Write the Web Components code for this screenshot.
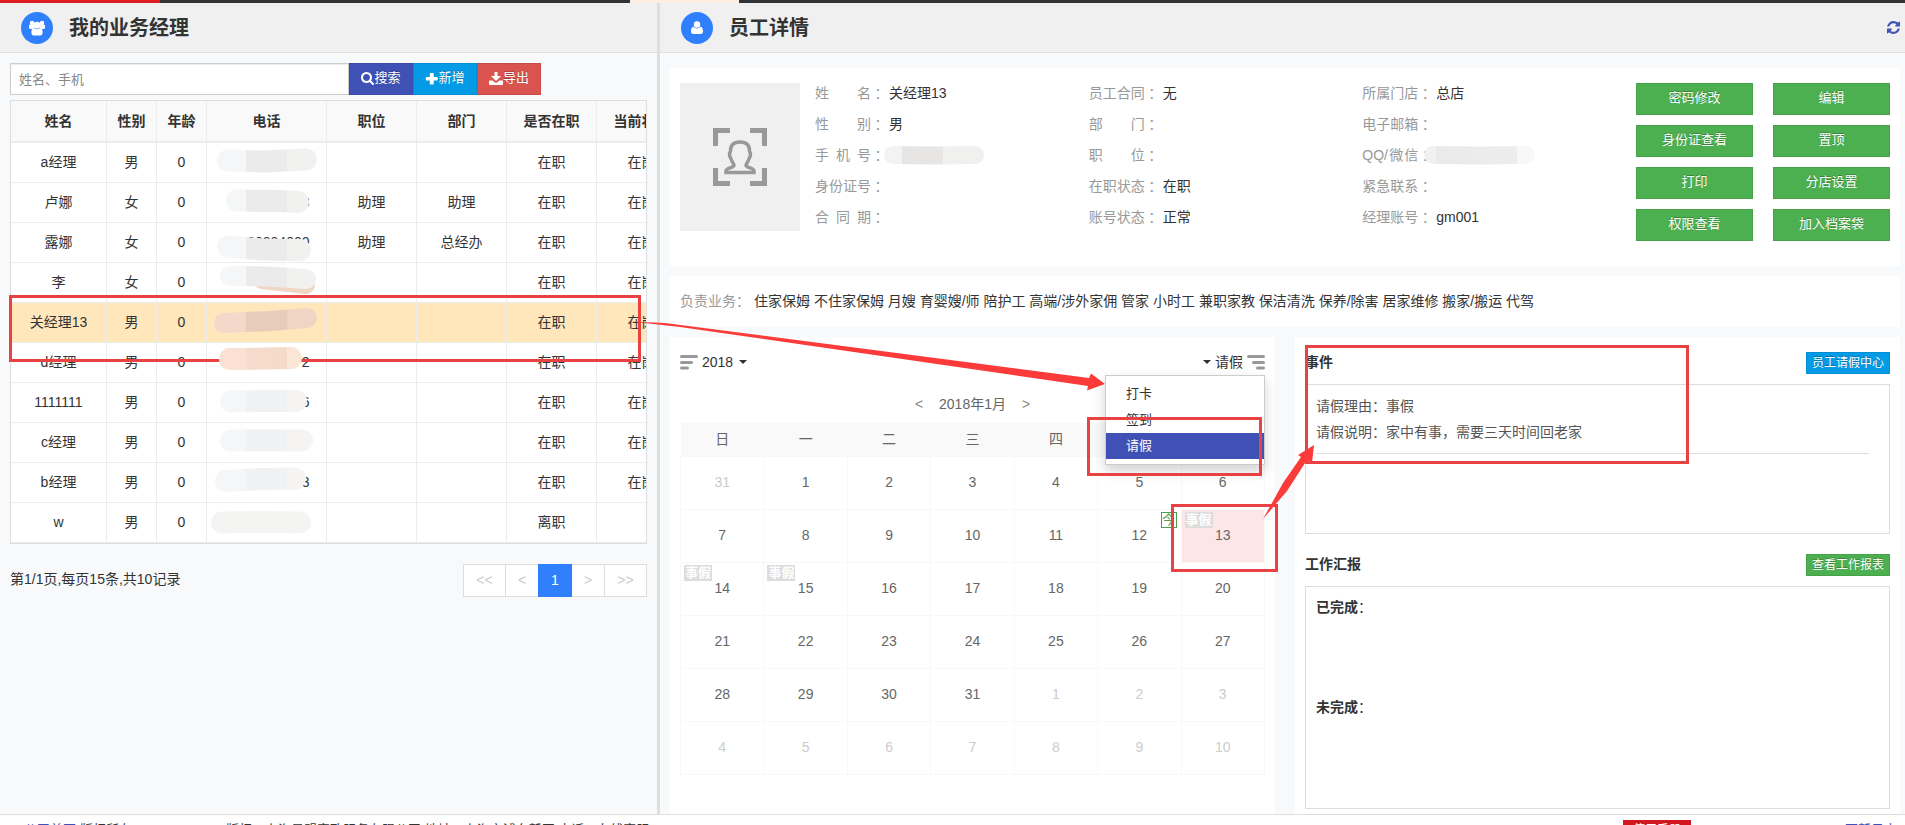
<!DOCTYPE html>
<html lang="zh-CN">
<head>
<meta charset="utf-8">
<title>员工详情</title>
<style>
  html, body { margin: 0; height: 100%; }
  body {
    font: 14px/21px "Liberation Sans", "Noto Sans CJK SC", sans-serif;
    color: #333;
    background: #f7f9fb;
    overflow: hidden;
  }
</style>
</head>
<body>
<app-shell>
  <manager-panel slot="left"></manager-panel>
  <employee-panel slot="right"></employee-panel>
</app-shell>

<script>
/* .mid sets full-width punctuation in the middle of its square */
const base = `
  *, *::before, *::after { box-sizing: border-box; }
  button, input, select { font: inherit; color: inherit; margin: 0; border-radius: 0; }
  button { cursor: pointer; padding: 0; border: 0; background: none; }
  svg { display: block; flex: none; }
  a { text-decoration: none; color: inherit; }
  .mid { font-family: "Noto Sans CJK TC", sans-serif; font-weight: normal; font-style: normal; line-height: 1; }
`;

function define(name, html, setup) {
  const template = document.createElement('template');
  template.innerHTML = html;
  customElements.define(name, class extends HTMLElement {
    constructor() {
      super();
      const root = this.attachShadow({ mode: 'open' });
      const style = document.createElement('style');
      style.textContent = base;
      root.append(style, template.content.cloneNode(true));
    }
    connectedCallback() {
      if (setup) setup(this.shadowRoot, this);
    }
  });
}

/* Panel title bar */
define('panel-header', `
  <style>
    :host { display: flex; align-items: center; height: 50px; padding: 0 5px 0 21px; gap: 16px; background: #f0f0f0; border-bottom: 1px solid #e0e0e0; }
    .disc { display: grid; place-items: center; width: 32px; height: 32px; border-radius: 50%; background: #3080fe; color: #fff; }
    h1 { margin: 0; font-size: 20px; line-height: 30px; font-weight: bold; flex: 1; }
  </style>
  <span class="disc"><slot name="icon"></slot></span>
  <h1><slot></slot></h1>
  <slot name="action"></slot>
`);

/* Solid coloured button */
define('color-button', `
  <style>
    :host { display: block; --tone: #4caf50; }
    :host([tone="indigo"]) { --tone: #3f51b5; }
    :host([tone="blue"]) { --tone: #039be5; }
    :host([tone="red"]) { --tone: #d9534f; }
    button { display: flex; align-items: center; justify-content: center; width: 100%; height: 32px; font-size: 13px; line-height: 20px; padding-bottom: 2px; color: #fff; background: var(--tone); border: 1px solid rgba(0,0,0,.08); white-space: nowrap; text-shadow: 0 -1px 0 rgba(0,0,0,.25); }
    :host([small]) button { height: 22px; padding: 0 5px; font-size: 12px; }
  </style>
  <button type="button"><slot name="icon"></slot><slot></slot></button>
`);

/* Staff table */
define('manager-table', `
  <style>
    :host { display: block; overflow: hidden; border: 1px solid #ddd; background: #fff; }
    table { width: 676px; table-layout: fixed; border-spacing: 0; border-collapse: separate; }
    th, td { padding: 0; text-align: center; border-right: 1px solid #ececec; border-bottom: 1px solid #ececec; white-space: nowrap; }
    th { height: 42px; background: #f9f9f9; border-bottom-width: 2px; }
    td { height: 40px; }
    tr.active td { background: #ffe6bb; }
    .tail { display: inline-block; width: 86px; text-align: right; vertical-align: top; }
  </style>
  <table>
    <colgroup><col width="96"><col width="50"><col width="50"><col width="120"><col width="90"><col width="90"><col width="90"><col width="90"></colgroup>
    <thead><tr><th>姓名</th><th>性别</th><th>年龄</th><th>电话</th><th>职位</th><th>部门</th><th>是否在职</th><th>当前状态</th></tr></thead>
    <tbody></tbody>
  </table>
`, root => {
  const rows = [
    ['a经理', '男', '', '', '', '在职', '在岗'],
    ['卢娜', '女', '3', '助理', '助理', '在职', '在岗'],
    ['露娜', '女', '00004000', '助理', '总经办', '在职', '在岗'],
    ['李', '女', '', '', '', '在职', '在岗'],
    ['关经理13', '男', '138', '', '', '在职', '在岗'],
    ['d经理', '男', '2', '', '', '在职', '在岗'],
    ['1111111', '男', '6', '', '', '在职', '在岗'],
    ['c经理', '男', '', '', '', '在职', '在岗'],
    ['b经理', '男', '3', '', '', '在职', '在岗'],
    ['w', '男', '', '', '', '离职', '']
  ];
  root.querySelector('tbody').innerHTML = rows.map(([name, sex, tail, post, dept, employed, state]) =>
    `<tr${name === '关经理13' ? ' class="active"' : ''}><td>${name}</td><td>${sex}</td><td>0</td><td><span class="tail">${tail}</span></td><td>${post}</td><td>${dept}</td><td>${employed}</td><td>${state}</td></tr>`
  ).join('');
});

/* Pagination */
define('page-nav', `
  <style>
    :host { display: flex; justify-content: space-between; align-items: center; }
    p { margin: 0; padding-bottom: 2px; }
    nav { display: flex; border: 1px solid #ddd; background: #fff; }
    button { width: 33px; height: 31px; color: #ccc; border-right: 1px solid #ddd; }
    button.wide { width: 42px; }
    button:last-child { border-right: 0; width: 41px; }
    button.on { width: 34px; height: 33px; margin: -1px 0 -1px -1px; background: #3080fe; color: #fff; border: 0; }
  </style>
  <p>第1/1页,每页15条,共10记录</p>
  <nav aria-label="分页">
    <button type="button" class="wide">&lt;&lt;</button><button type="button">&lt;</button><button type="button" class="on">1</button><button type="button">&gt;</button><button type="button" class="wide">&gt;&gt;</button>
  </nav>
`);

define('manager-panel', `
  <style>
    :host { display: block; height: 100%; border-right: 3px solid #dcdfde; }
    .body { padding: 10px; }
    form { display: flex; margin-bottom: 5px; }
    input { width: 339px; height: 32px; padding: 0 8px; font-size: 13px; border: 1px solid #ccc; background: #fff; box-shadow: inset 0 1px 1px rgba(0,0,0,.08); }
    input::placeholder { color: #888; opacity: 1; }
    color-button { width: 64px; }
    page-nav { margin-top: 20px; }
  </style>
  <panel-header>
    <svg slot="icon" width="16" height="16" viewBox="0 0 16 16" fill="currentColor"><circle cx="3" cy="3" r="2.2"/><circle cx="13" cy="3" r="2.2"/><path d="M0 6q0-1.500 1-1.500h4L5 8.500Q3.500 8.500 2.500 9H1.500Q0 9 0 7.500zM16 6q0-1.500-1-1.500h-4L11 8.500q1.500 0 2.500.5h1Q16 9 16 7.500z"/><circle cx="8" cy="5.200" r="3.400"/><path d="M5 8Q6.500 9.200 8 9.200t3-1.200c2.200.2 2.600 2.600 2.600 4.600 0 1.800-1 2.900-2.300 2.900H4.700C3.400 15.500 2.400 14.400 2.400 12.600c0-2 .4-4.400 2.600-4.600z"/></svg>
    我的业务经理
  </panel-header>
  <div class="body">
    <form>
      <input type="text" placeholder="姓名、手机" aria-label="姓名、手机">
      <color-button tone="indigo"><svg slot="icon" width="13" height="13" viewBox="0 0 1664 1664" fill="#fff"><path d="M1152 704q0-185-131.500-316.500T704 256 387.500 387.500 256 704t131.500 316.500T704 1152t316.500-131.500T1152 704zm512 832q0 52-38 90t-90 38q-54 0-90-38l-343-342q-179 124-399 124-143 0-273.500-55.500t-225-150-150-225T0 704t55.500-273.500 150-225 225-150T704 0t273.500 55.500 225 150 150 225T1408 704q0 220-124 399l343 343q37 37 37 90z"/></svg>搜索</color-button>
      <color-button tone="blue"><svg slot="icon" width="13" height="13" viewBox="0 0 13 13" fill="#fff"><path d="M5.500 1h2.500q.7 0 .7.700V5H12q.7 0 .7.700v2.100q0 .7-.7.700H8.700v3.300q0 .7-.7.700H5.500q-.7 0-.7-.7V8.500H1.500Q.8 8.500.8 7.800V5.700Q.8 5 1.500 5h3.300V1.700q0-.7.700-.7z"/></svg>新增</color-button>
      <color-button tone="red"><svg slot="icon" width="14" height="13" viewBox="0 0 14 13" fill="#fff"><path d="M5.500 0h3v4H12L7 9 2 4h3.500zM0 9.200Q0 8.500.7 8.500h3L5.500 10.200Q7 11.500 8.500 10.200L10.300 8.500h3q.7 0 .7.700v3q0 .8-.7.800H.7Q0 13 0 12.200z"/></svg>导出</color-button>
    </form>
    <manager-table></manager-table>
    <page-nav></page-nav>
  </div>
`);

/* Employee summary card */
define('employee-info', `
  <style>
    :host { display: flex; padding: 15px 10px 25px; background: #fff; }
    .photo { display: grid; place-items: center; flex: none; width: 120px; height: 148px; background: #f0f0f0; }
    .facts { flex: 1; display: grid; grid-template-columns: repeat(3, 1fr); }
    dl { margin: 0; padding-left: 15px; display: grid; grid-template-columns: 56px 18px 1fr; grid-auto-rows: 21px; row-gap: 10px; }
    dt, dd { margin: 0; white-space: nowrap; }
    dt { color: #999; text-align: justify; text-align-last: justify; }
    .mid { color: #999; line-height: 21px; }
    .actions { display: grid; grid-template-columns: 117px 117px; gap: 10px 20px; align-content: start; margin-left: 15px; }
  </style>
  <div class="photo">
    <svg width="54" height="58" viewBox="0 0 54 58" fill="none" stroke="#999"><path stroke-width="5" d="M2.500 18V2.500H17M37 2.500h14.500V18M51.500 40v15.500H37M17 55.500H2.500V40"/><path stroke-width="3.500" d="M27 14c-7 0-9.500 4-9.500 9 0 1-1.500 2-1 4 .5 3 1.500 3 2 5 1 3 2.500 4 2.500 5.500 0 2-8 2.500-8 5.500v1.500h28V43c0-3-8-3.500-8-5.500 0-1.500 1.500-2.500 2.500-5.500.5-2 1.500-2 2-5 .5-2-1-3-1-4 0-5-2.500-9-9.500-9z"/></svg>
  </div>
  <div class="facts">
    <dl><dt>姓 名</dt><i class="mid">：</i><dd>关经理13</dd><dt>性 别</dt><i class="mid">：</i><dd>男</dd><dt>手 机 号</dt><i class="mid">：</i><dd></dd><dt>身份证号</dt><i class="mid">：</i><dd></dd><dt>合 同 期</dt><i class="mid">：</i><dd></dd></dl>
    <dl><dt>员工合同</dt><i class="mid">：</i><dd>无</dd><dt>部 门</dt><i class="mid">：</i><dd></dd><dt>职 位</dt><i class="mid">：</i><dd></dd><dt>在职状态</dt><i class="mid">：</i><dd>在职</dd><dt>账号状态</dt><i class="mid">：</i><dd>正常</dd></dl>
    <dl><dt>所属门店</dt><i class="mid">：</i><dd>总店</dd><dt>电子邮箱</dt><i class="mid">：</i><dd></dd><dt>QQ/微信</dt><i class="mid">：</i><dd></dd><dt>紧急联系</dt><i class="mid">：</i><dd></dd><dt>经理账号</dt><i class="mid">：</i><dd>gm001</dd></dl>
  </div>
  <div class="actions">
    <color-button>密码修改</color-button><color-button>编辑</color-button>
    <color-button>身份证查看</color-button><color-button>置顶</color-button>
    <color-button>打印</color-button><color-button>分店设置</color-button>
    <color-button>权限查看</color-button><color-button>加入档案袋</color-button>
  </div>
`);

define('business-list', `
  <style>
    :host { display: flex; padding: 15px 10px; background: #fff; }
    b { width: 74px; font-weight: normal; color: #999; }
  </style>
  <b>负责业务<span class="mid">：</span></b><span><slot></slot></span>
`);

/* Attendance calendar */
define('leave-calendar', `
  <style>
    :host { display: block; padding: 15px 10px 0; background: #fff; }
    .bar { position: relative; display: flex; justify-content: space-between; height: 20px; }
    .pick { display: flex; align-items: center; gap: 4px; line-height: 20px; }
    select { appearance: none; border: 0; background: none; padding: 0; width: 33px; outline: 0; }
    .menu { position: absolute; z-index: 1; right: 0; top: 23px; width: 160px; margin: 0; padding: 5px 0; list-style: none; background: #fff; border: 1px solid #ccc; box-shadow: 0 6px 12px rgba(0,0,0,.18); }
    .menu button { display: block; width: 100%; padding: 0 20px; text-align: left; font-size: 13px; line-height: 26px; }
    .menu .on { background: #3f51b5; color: #fff; }
    .month { display: flex; justify-content: center; gap: 15px; margin: 22px 0 8px; color: #666; }
    .month button { color: #888; width: 10px; }
    table { width: 100%; table-layout: fixed; border-collapse: collapse; color: #666; }
    th { height: 33px; padding: 0; background: #f9f9f9; font-weight: normal; }
    td { position: relative; height: 53px; padding: 0; text-align: center; border: 1px solid #f8f8f8; }
    td.out { color: #ccc; }
    td.sel { background: #ffe6e6; }
    .tag { position: absolute; left: 3px; top: 2px; width: 28px; height: 16px; background: #ddd; color: #fff; font-size: 13px; line-height: 16px; font-weight: bold; }
    .now { position: absolute; right: 4px; top: 2px; width: 16px; height: 16px; border: 1px solid #4c9e50; color: #4c9e50; font-size: 13px; line-height: 14px; }
  </style>
  <div class="bar">
    <label class="pick">
      <svg width="18" height="15" viewBox="0 0 18 15" stroke="#999" stroke-width="3" stroke-linecap="round"><path d="M1.500 1.500h15M1.500 7.500h10M1.500 13h6"/></svg>
      <select aria-label="年份"><option>2018</option></select>
      <svg width="8" height="4" viewBox="0 0 8 4" fill="#333"><path d="M0 0h8L4 4z"/></svg>
    </label>
    <button type="button" class="pick" aria-haspopup="true" aria-expanded="true">
      <svg width="8" height="4" viewBox="0 0 8 4" fill="#333"><path d="M0 0h8L4 4z"/></svg>
      请假
      <svg width="18" height="15" viewBox="0 0 18 15" stroke="#999" stroke-width="3" stroke-linecap="round"><path d="M1.500 1.500h15M6.500 7.500h10M10.500 13h6"/></svg>
    </button>
    <ul class="menu">
      <li><button type="button">打卡</button></li>
      <li><button type="button">签到</button></li>
      <li><button type="button" class="on">请假</button></li>
    </ul>
  </div>
  <div class="month"><button type="button">&lt;</button><span>2018年1月</span><button type="button">&gt;</button></div>
  <table>
    <thead><tr><th>日</th><th>一</th><th>二</th><th>三</th><th>四</th><th>五</th><th>六</th></tr></thead>
    <tbody></tbody>
  </table>
`, root => {
  const leave = new Set([13, 14, 15]);
  let html = '';
  for (let i = 0; i < 42; i++) {
    const day = i === 0 ? 31 : i > 31 ? i - 31 : i;
    const out = i === 0 || i > 31;
    const cls = out ? ' class="out"' : i === 13 ? ' class="sel"' : '';
    const tag = leave.has(i) ? '<span class="tag">事假</span>' : i === 12 ? '<span class="now">今</span>' : '';
    html += (i % 7 ? '' : '<tr>') + `<td${cls}>${tag}${day}</td>` + (i % 7 === 6 ? '</tr>' : '');
  }
  root.querySelector('tbody').innerHTML = html;
});

/* Titled box with a button at its right */
define('titled-box', `
  <style>
    :host { display: flex; flex-direction: column; }
    header { display: flex; align-items: center; justify-content: space-between; height: 22px; margin-bottom: 10px; }
    h2 { margin: 0; font-size: 14px; line-height: 21px; padding-bottom: 2px; }
    .box { flex: 1; padding: 8px 10px; border: 1px solid #ddd; }
  </style>
  <header><h2><slot name="title"></slot></h2><slot name="action"></slot></header>
  <div class="box"><slot></slot></div>
`);

define('work-panel', `
  <style>
    :host { display: flex; flex-direction: column; gap: 20px; padding: 15px 10px 5px; background: #fff; }
    .events { height: 182px; }
    .report { flex: 1; }
    .event { margin-right: 10px; padding-bottom: 8px; border-bottom: 1px solid #ddd; color: #555; }
    p { margin: 0; line-height: 26px; }
    h3 { margin: 0; font-size: 14px; line-height: 24px; height: 100px; }
  </style>
  <titled-box class="events">
    <span slot="title">事件</span><color-button slot="action" small tone="blue">员工请假中心</color-button>
    <div class="event"><p>请假理由<span class="mid">：</span>事假</p><p>请假说明<span class="mid">：</span>家中有事<span class="mid">，</span>需要三天时间回老家</p></div>
  </titled-box>
  <titled-box class="report">
    <span slot="title">工作汇报</span><color-button slot="action" small>查看工作报表</color-button>
    <h3>已完成<span class="mid">：</span></h3>
    <h3>未完成<span class="mid">：</span></h3>
  </titled-box>
`);

define('employee-panel', `
  <style>
    :host { display: flex; flex-direction: column; height: 100%; }
    .refresh { color: #3f51b5; }
    .body { flex: 1; display: flex; flex-direction: column; gap: 10px; padding: 15px 5px 0 10px; }
    .columns { flex: 1; display: grid; grid-template-columns: 1fr 1fr; gap: 20px; }
  </style>
  <panel-header>
    <svg slot="icon" width="12" height="13" viewBox="0 0 12 13" fill="currentColor"><circle cx="6" cy="3.500" r="3.200"/><path d="M2.500 5.800Q4 7.500 6 7.500t3.500-1.700C11.600 6.200 12 8.500 12 10.500 12 12 11 13 9.800 13H2.200C1 13 0 12 0 10.500c0-2 .4-4.300 2.500-4.700z"/></svg>
    员工详情
    <button slot="action" class="refresh" type="button" aria-label="刷新"><svg width="13" height="13" viewBox="128 128 1536 1536" fill="currentColor"><path d="M1639 1056q0 5-1 7-64 268-268 434.500T892 1664q-146 0-282.500-55T366 1452l-129 129q-19 19-45 19t-45-19-19-45v-448q0-26 19-45t45-19h448q26 0 45 19t19 45-19 45l-137 137q71 66 161 102t187 36q134 0 250-65t186-179q11-17 53-117 8-23 30-23h192q13 0 22.500 9.500t9.500 22.500zm25-800v448q0 26-19 45t-45 19h-448q-26 0-45-19t-19-45 19-45l138-138Q1097 384 896 384q-134 0-250 65T460 628q-11 17-53 117-8 23-30 23H178q-13 0-22.500-9.500T146 736v-7q65-268 270-434.500T896 128q146 0 284 55.500T1425 340l130-129q19-19 45-19t45 19 19 45z"/></svg></button>
  </panel-header>
  <div class="body">
    <employee-info></employee-info>
    <business-list>住家保姆 不住家保姆 月嫂 育婴嫂/师 陪护工 高端/涉外家佣 管家 小时工 兼职家教 保洁清洗 保养/除害 居家维修 搬家/搬运 代驾</business-list>
    <div class="columns"><leave-calendar></leave-calendar><work-panel></work-panel></div>
  </div>
`);

define('app-footer', `
  <style>
    :host { display: flex; height: 11px; padding: 5px 8px 0 24px; border-top: 1px solid #ddd; background: #fff; font-size: 13px; line-height: 20px; white-space: nowrap; }
    a { color: #3f51b5; }
    .copy { margin: 0 94px 0 4px; }
    .note { flex: 1; }
    .guide { height: 22px; padding: 0 10px; margin-right: 154px; background: #d2181e; color: #fff; font-size: 12px; }
  </style>
  <a href="#">公司首页</a><span class="copy">版权所有</span>
  <span class="note">版权：上海易盟家政服务有限公司 地址：上海市浦东新区 电话：在线客服</span>
  <a class="guide" href="#">使用手册</a>
  <a href="#">更新日志</a>
`);

/* Hand-drawn marks: masks over phone numbers, red frames and arrows */
define('markup-layer', `
  <style>
    :host { position: absolute; z-index: 2; inset: 0; pointer-events: none; }
    svg { width: 100%; height: 100%; overflow: visible; }
  </style>
  <svg aria-hidden="true">
    <defs>
      <linearGradient id="grey" gradientUnits="userSpaceOnUse" x1="206" x2="326" y1="0" y2="0"><stop offset=".333" stop-color="#f4f6f7"/><stop offset=".333" stop-color="#ebebeb"/><stop offset=".675" stop-color="#ebebeb"/><stop offset=".675" stop-color="#f1f1f0"/></linearGradient>
      <linearGradient id="pale" gradientUnits="userSpaceOnUse" x1="206" x2="326" y1="0" y2="0"><stop offset=".333" stop-color="#f5f6f7"/><stop offset=".333" stop-color="#f0f1f2"/><stop offset=".675" stop-color="#f0f1f2"/><stop offset=".675" stop-color="#f5f4f3"/></linearGradient>
      <linearGradient id="rose" gradientUnits="userSpaceOnUse" x1="206" x2="326" y1="0" y2="0"><stop offset=".333" stop-color="#f4d9ca"/><stop offset=".333" stop-color="#e7ccbb"/><stop offset=".675" stop-color="#e7ccbb"/><stop offset=".675" stop-color="#f0d5c4"/></linearGradient>
      <linearGradient id="peach" gradientUnits="userSpaceOnUse" x1="206" x2="326" y1="0" y2="0"><stop offset=".333" stop-color="#fae1d1"/><stop offset=".333" stop-color="#f6dccc"/><stop offset=".675" stop-color="#f3dac9"/><stop offset=".675" stop-color="#fbe5d6"/></linearGradient>
      <linearGradient id="info" gradientUnits="userSpaceOnUse" x1="884" x2="984" y1="0" y2="0"><stop offset=".18" stop-color="#f2f3f3"/><stop offset=".18" stop-color="#e7e6e5"/><stop offset=".59" stop-color="#e7e6e5"/><stop offset=".59" stop-color="#f0f0ef"/></linearGradient>
      <linearGradient id="qq" gradientUnits="userSpaceOnUse" x1="1424" x2="1535" y1="0" y2="0"><stop offset=".11" stop-color="#f1f1f1"/><stop offset=".11" stop-color="#eaeaea"/><stop offset=".84" stop-color="#ededed"/><stop offset=".84" stop-color="#f8f8f8"/></linearGradient>
    </defs>
    <g fill="none" stroke="#e84342" stroke-width="3">
      <path d="M10.500 296.500h629v64h-629z"/>
      <path d="M1088.500 418.500h172v56h-172z"/>
      <path d="M1172.500 505.500h104v65h-104z"/>
      <path d="M1306.500 346.500h381v116h-381z"/>
    </g>
    <g fill="#fb3b3a">
      <path d="M631 321.500 665 323 1089 378 1091 373.500 1105 384 1087 390.500 1088 386 840 350 680 327z"/>
      <path d="M1263 519 1283 483 1301 457 1298 455 1314 445 1312 463 1307 460 1287 491z"/>
    </g>
    <g fill="none" stroke-linecap="round" stroke-linejoin="round" stroke-width="22">
      <path stroke="url(#grey)" d="M228 160.500 265 161.500 306 159.500"/>
      <path stroke="url(#grey)" d="M237 200.500 280 201 298 202"/>
      <path stroke="url(#grey)" d="M228 246.500 262 249.500 300 250"/>
      <path stroke="#f0d6c4" stroke-width="18" d="M262 280 306 285"/>
      <path stroke="url(#grey)" stroke-width="20" d="M230 276 268 276.500 306 279"/>
      <path stroke="url(#rose)" stroke-width="20" d="M224 323 270 321 307 318"/>
      <path stroke="url(#peach)" d="M230 359 265 358.500 291 358"/>
      <path stroke="url(#pale)" d="M231 401.500 265 401 296 401"/>
      <path stroke="url(#pale)" d="M231 440.500h71"/>
      <path stroke="url(#pale)" d="M226 481 262 479 295 478.500"/>
      <path stroke="#f4f4f3" d="M222 522.500 260 522 300 522.500"/>
      <path stroke="url(#info)" stroke-width="18" d="M893 155 935 155.500 975 155"/>
      <path stroke="url(#qq)" stroke-width="18" d="M1433 155 1480 155.500 1526 155"/>
    </g>
  </svg>
`);

define('app-shell', `
  <style>
    :host { display: grid; position: relative; grid-template-rows: 3px 1fr auto; height: 100vh; overflow: hidden; }
    .strip { background: linear-gradient(90deg, #dc1c20 160px, #333 160px 630px, #fdeee3 630px 739px, #333 739px); }
    main { display: grid; grid-template-columns: 660px minmax(0, 1fr); min-height: 0; }
  </style>
  <div class="strip"></div>
  <main><slot name="left"></slot><slot name="right"></slot></main>
  <app-footer></app-footer>
  <markup-layer></markup-layer>
`);
</script>
</body>
</html>
